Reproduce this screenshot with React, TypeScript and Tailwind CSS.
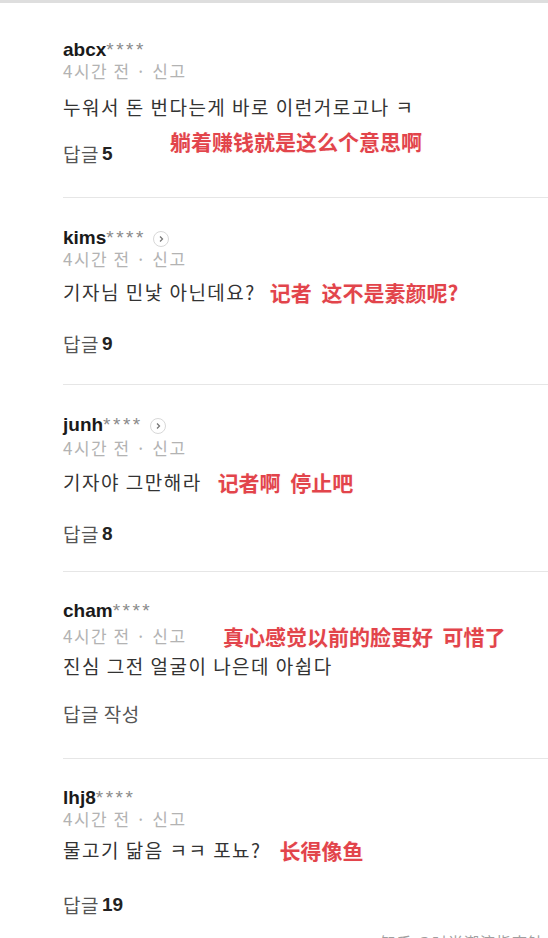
import type { ReactNode } from "react";

type Comment = {
  name: string;
  chevron?: boolean;
  text: string;
  note?: ReactNode;
  reply: string;
  count?: string;
  pt: string;
  metaMt: string;
  textMt: string;
  replyMt: string;
  h: string;
  overlay?: ReactNode;
};

const latin = { fontFamily: '"Liberation Sans", Arial, sans-serif' };
const kr = { fontFamily: '"Noto Sans CJK KR", "Noto Sans", sans-serif' };
const cn = { fontFamily: '"Noto Sans CJK SC", "Noto Sans", sans-serif' };

function Note({ children, className = "" }: { children: ReactNode; className?: string }) {
  return (
    <span
      style={cn}
      className={`text-[21px] leading-[24px] font-bold text-[#e2444b] [text-shadow:0_0_3px_#fff2f2] whitespace-pre ${className}`}
    >
      {children}
    </span>
  );
}

const comments: Comment[] = [
  {
    name: "abcx",
    text: "누워서 돈 번다는게 바로 이런거로고나 ㅋ",
    reply: "답글",
    count: "5",
    pt: "pt-[36px]",
    metaMt: "mt-0",
    textMt: "mt-[14px]",
    replyMt: "mt-[23px]",
    h: "h-[195px]",
    overlay: (
      <div className="absolute left-[107px] top-[126px]">
        <Note>躺着赚钱就是这么个意思啊</Note>
      </div>
    ),
  },
  {
    name: "kims",
    chevron: true,
    text: "기자님 민낯 아닌데요?",
    note: <Note className="ml-[14px]">记者  这不是素颜呢?</Note>,
    reply: "답글",
    count: "9",
    pt: "pt-[29px]",
    metaMt: "mt-0",
    textMt: "mt-[11px]",
    replyMt: "mt-[28px]",
    h: "h-[187px]",
  },
  {
    name: "junh",
    chevron: true,
    text: "기자야 그만해라",
    note: <Note className="ml-[16px]">记者啊  停止吧</Note>,
    reply: "답글",
    count: "8",
    pt: "pt-[29px]",
    metaMt: "mt-[2px]",
    textMt: "mt-[12px]",
    replyMt: "mt-[28px]",
    h: "h-[187px]",
  },
  {
    name: "cham",
    text: "진심 그전 얼굴이 나은데 아쉽다",
    reply: "답글 작성",
    pt: "pt-[28px]",
    metaMt: "mt-[4px]",
    textMt: "mt-[8px]",
    replyMt: "mt-[24px]",
    h: "h-[187px]",
    overlay: (
      <div className="absolute left-[160px] top-[52px]">
        <Note>真心感觉以前的脸更好  可惜了</Note>
      </div>
    ),
  },
  {
    name: "lhj8",
    text: "물고기 닮음 ㅋㅋ 포뇨?",
    note: <Note className="ml-[18px]">长得像鱼</Note>,
    reply: "답글",
    count: "19",
    pt: "pt-[28px]",
    metaMt: "mt-0",
    textMt: "mt-[9px]",
    replyMt: "mt-[31px]",
    h: "h-[174px]",
  },
];

function Chevron() {
  return (
    <span className="ml-[7px] mt-[4px] flex h-[16px] w-[16px] items-center justify-center rounded-full border-[1.5px] border-[#d8d8d8] bg-white">
      <svg width="8" height="8" viewBox="0 0 8 8">
        <path d="M3 1.5 L5.5 4 L3 6.5" fill="none" stroke="#777" strokeWidth="1.3" />
      </svg>
    </span>
  );
}

function CommentItem({ c, last }: { c: Comment; last: boolean }) {
  return (
    <div className={`relative flex flex-col ${c.pt} ${c.h} ${last ? "" : "border-b border-[#e6e6e6]"}`}>
      <div className="flex h-[22px] items-start">
        <span style={latin} className="text-[19px] leading-[22px] font-bold text-[#1a1a1a]">
          {c.name}
        </span>
        <span style={latin} className="text-[19px] leading-[22px] tracking-[2.5px] text-[#8a8a8a]">
          ****
        </span>
        {c.chevron && <Chevron />}
      </div>
      <div style={kr} className={`${c.metaMt} h-[20px] text-[17px] leading-[20px] tracking-[1.5px] text-[#b3b3b3]`}>
        4시간 전 · 신고
      </div>
      <div className={`${c.textMt} flex h-[24px] items-start`}>
        <span style={kr} className="text-[19px] leading-[24px] tracking-[1.5px] text-[#333]">
          {c.text}
        </span>
        {c.note}
      </div>
      <div className={`${c.replyMt} flex h-[24px] items-start`}>
        <span style={kr} className="text-[19px] leading-[24px] tracking-[0.5px] text-[#555]">
          {c.reply}
        </span>
        {c.count && (
          <span style={latin} className="ml-[3px] text-[19px] leading-[24px] font-bold text-[#222]">
            {c.count}
          </span>
        )}
      </div>
      {c.overlay}
    </div>
  );
}

export default function App() {
  return (
    <div className="h-[938px] w-[548px] overflow-hidden bg-white">
      <div className="h-[3px] bg-[#dedede]" />
      <div className="pl-[63px]">
        {comments.map((c, i) => (
          <CommentItem key={c.name} c={c} last={i === comments.length - 1} />
        ))}
        <div className="flex justify-end pr-[4px]">
          <span style={cn} className="text-[15px] leading-[18px] tracking-[1px] text-[#a0a0a0]">
            知乎 @时尚潮流指南针
          </span>
        </div>
      </div>
    </div>
  );
}
